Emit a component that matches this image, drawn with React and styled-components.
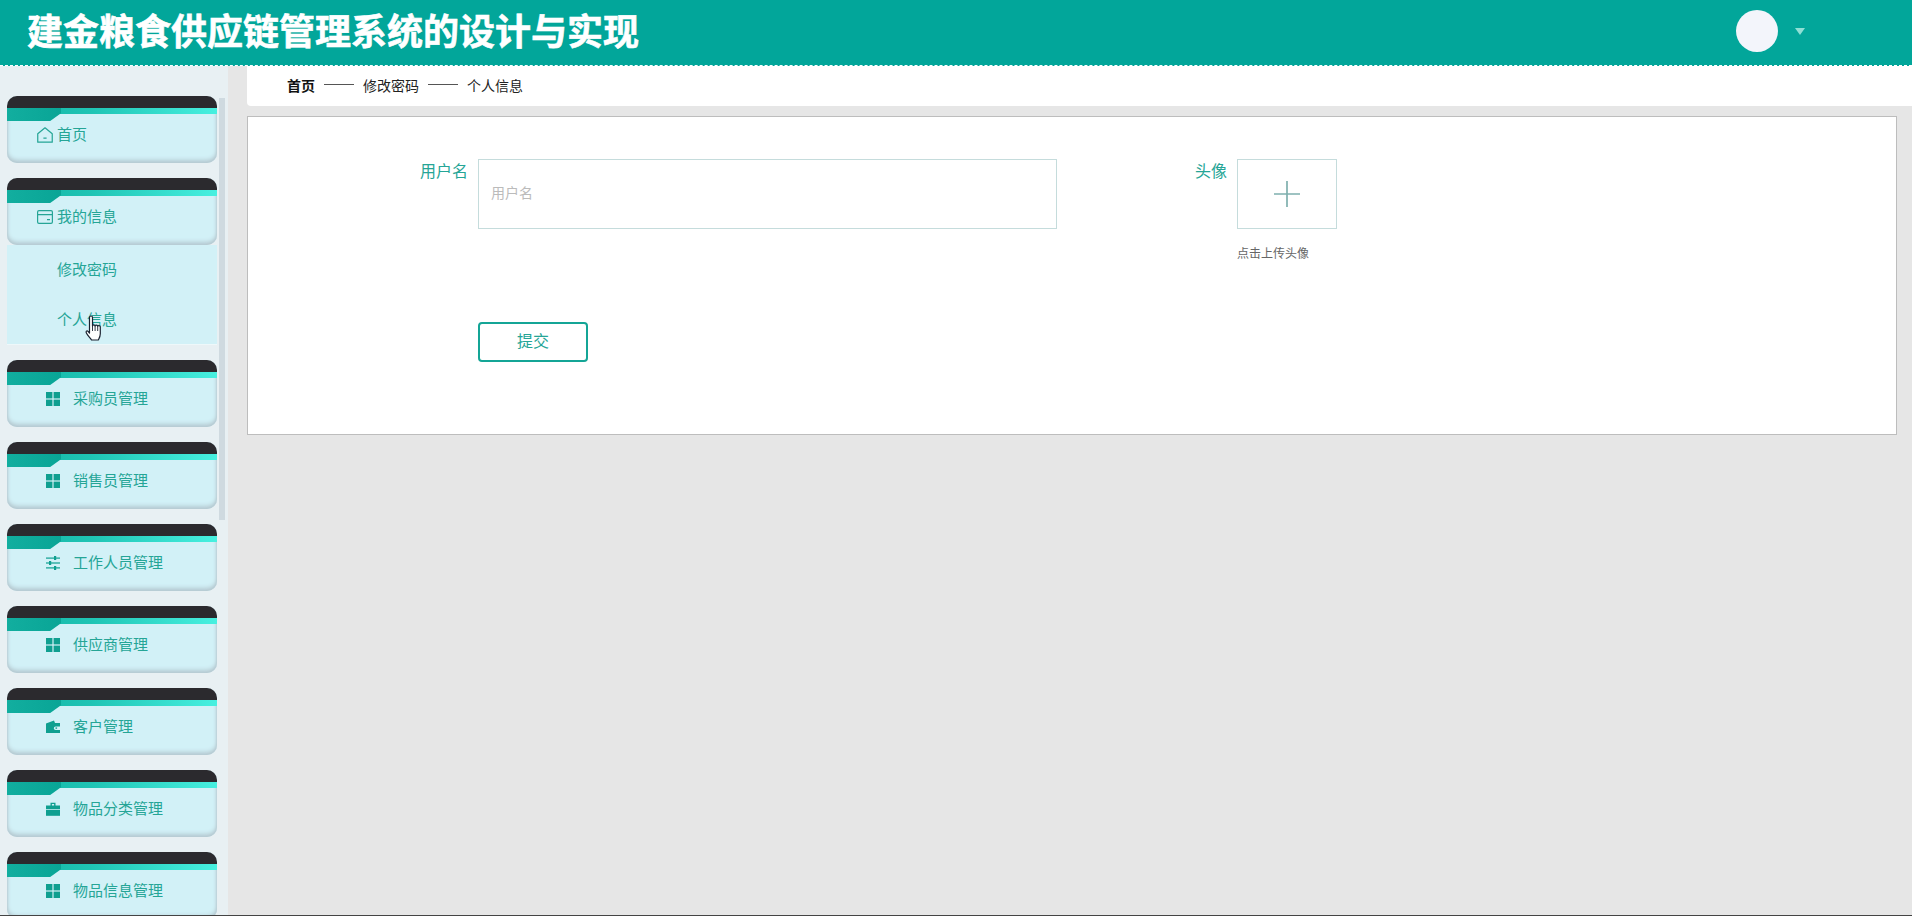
import React from "react";
import styled, { createGlobalStyle } from "styled-components";

const GlobalStyle = createGlobalStyle`
  html, body {
    margin: 0;
    padding: 0;
    height: 100%;
    overflow: hidden;
    background: #e6e6e6;
    font-family: "Noto Sans CJK SC", "Noto Sans", "Liberation Sans", sans-serif;
  }
  * {
    box-sizing: border-box;
  }
`;

const teal = "#25a596";
const iconTeal = "#0f9f90";

const Page = styled.div`
  position: relative;
  height: 100vh;
  display: flex;
  flex-direction: column;
  overflow: hidden;
  border-bottom: 1px solid #444;
`;

const Header = styled.header`
  flex: none;
  height: 66px;
  padding: 0 107px 3px 27px;
  display: flex;
  align-items: center;
  justify-content: space-between;
  background: #02a69a;
  border-bottom: 1px dashed #fff;
`;

const Title = styled.h1`
  margin: 0 0 5px;
  font-size: 36px;
  line-height: 56px;
  font-weight: 700;
  color: #fff;
  -webkit-text-stroke: 0.6px #fff;
`;

const UserBox = styled.div`
  display: flex;
  align-items: center;
  gap: 17px;
`;

const Avatar = styled.div`
  width: 42px;
  height: 42px;
  border-radius: 50%;
  background: #f3f5fb;
`;

const Caret = styled.div`
  width: 0;
  height: 0;
  border-left: 5px solid transparent;
  border-right: 5px solid transparent;
  border-top: 7px solid #8fdfd5;
`;

const Body = styled.div`
  flex: 1;
  min-height: 0;
  display: flex;
`;

const Sidebar = styled.aside`
  position: relative;
  flex: none;
  width: 228px;
  padding: 30px 0 0 7px;
  overflow: hidden;
  background: #e8f0f3;
`;

const ScrollThumb = styled.div`
  position: absolute;
  top: 32px;
  right: 3px;
  width: 6px;
  height: 422px;
  background: #cfdae0;
`;

const Group = styled.div`
  width: 210px;
  margin-bottom: 15px;
`;

const Item = styled.div`
  position: relative;
  height: 67px;
  padding: 11px 0 0 ${(p) => (p.$wide ? 39 : 30)}px;
  display: flex;
  align-items: center;
  gap: ${(p) => (p.$wide ? 13 : 4)}px;
  border-radius: 10px;
  overflow: hidden;
  font-size: 15px;
  color: ${teal};
  background: #d2f1f7;
  box-shadow: inset 0 -3px 4px #b5c9d1, inset 1px 0 2px #c4d8de, inset -1px 0 2px #c4d8de;

  &::before {
    content: "";
    position: absolute;
    inset: 0 0 auto 0;
    height: 18px;
    background:
      linear-gradient(#2b2a2e, #2b2a2e) top / 100% 12px no-repeat,
      linear-gradient(90deg, #12b3a4 0%, #1fc4b4 40%, #47f0e0 100%) bottom / 100% 6px no-repeat;
  }

  &::after {
    content: "";
    position: absolute;
    left: 0;
    top: 12px;
    width: 54px;
    height: 13px;
    background: linear-gradient(90deg, #12ae9f, #09a596);
    clip-path: polygon(0 0, 100% 0, 100% 40%, 80% 100%, 0 100%);
  }

  svg {
    flex: none;
  }
`;

const ItemText = styled.span`
  margin-bottom: 3px;
`;

const SubMenu = styled.div`
  height: 100px;
  padding: 0 0 0 50px;
  display: flex;
  flex-direction: column;
  font-size: 15px;
  color: ${teal};
  background: #d2f1f7;
  border-bottom: 1px solid #eef8fa;
`;

const SubItem = styled.div`
  height: 51px;
  line-height: 47px;
`;

const Main = styled.main`
  flex: 1;
  min-width: 0;
  margin-left: 19px;
`;

const Breadcrumb = styled.nav`
  height: 40px;
  padding: 0 0 3px 40px;
  display: flex;
  align-items: center;
  gap: 9px;
  font-size: 14px;
  color: #222;
  background: #fff;
  border-bottom-left-radius: 4px;
`;

const Crumb = styled.span`
  font-weight: ${(p) => (p.$bold ? 700 : 400)};
  color: ${(p) => (p.$bold ? "#111" : "#222")};
`;

const CrumbLine = styled.span`
  width: 30px;
  height: 1px;
  background: #555;
`;

const Panel = styled.section`
  margin: 10px 15px 0 0;
  padding: 42px 0 72px;
  background: #fff;
  border: 1px solid #bdbdbd;
`;

const FormRow = styled.div`
  display: flex;
  align-items: flex-start;
`;

const Label = styled.label`
  width: ${(p) => p.$width}px;
  margin-right: 10px;
  text-align: right;
  font-size: 16px;
  line-height: 22px;
  color: ${teal};
`;

const Input = styled.input`
  width: 579px;
  height: 70px;
  padding: 0 12px 4px;
  font: inherit;
  font-size: 14px;
  background: #fff;
  border: 1px solid #c5dcdc;
  outline: none;

  &::placeholder {
    color: #bbb;
    opacity: 1;
  }
`;

const UploadColumn = styled.div`
  display: flex;
  flex-direction: column;
`;

const UploadBox = styled.div`
  width: 100px;
  height: 70px;
  display: flex;
  align-items: center;
  justify-content: center;
  background: #fff;
  border: 1px solid #c5dcdc;
`;

const Hint = styled.div`
  margin: 14px 0 2px;
  font-size: 12px;
  line-height: 20px;
  color: #666;
`;

const SubmitButton = styled.button`
  display: block;
  width: 110px;
  height: 40px;
  margin: 57px 0 0 230px;
  padding: 0 0 4px;
  font: inherit;
  font-size: 16px;
  color: ${teal};
  background: #fff;
  border: 2px solid #14a596;
  border-radius: 4px;
`;

const HandCursor = styled.div`
  position: absolute;
  left: 84px;
  top: 315px;
`;

const HomeIcon = () => (
  <svg width="16" height="16" viewBox="0 0 17 17" fill="none" stroke={teal} strokeWidth="1.3">
    <path d="M0.8 7.2 8.500 0.9l7.700 6.300v8.900H0.800z" strokeLinejoin="round" />
    <path d="M6.800 11.800h3.400" />
  </svg>
);

const CardIcon = () => (
  <svg width="16" height="16" viewBox="0 0 16 16" fill="none" stroke={teal} strokeWidth="1.2">
    <rect x="0.6" y="1.600" width="14.800" height="12.800" rx="1.400" />
    <path d="M0.6 5.600h14.800" />
    <path d="M10 10.600h3" />
  </svg>
);

const GridIcon = () => (
  <svg width="14" height="14" viewBox="0 0 14 14" fill={iconTeal}>
    <rect x="0" y="0" width="6.400" height="6.400" />
    <rect x="7.600" y="0" width="6.400" height="6.400" />
    <rect x="0" y="7.600" width="6.400" height="6.400" />
    <rect x="7.600" y="7.600" width="6.400" height="6.400" />
  </svg>
);

const SlidersIcon = () => (
  <svg width="14" height="14" viewBox="0 0 14 14" fill={iconTeal}>
    <rect x="0" y="1.500" width="14" height="1.200" />
    <rect x="8" y="0" width="2.200" height="4" />
    <rect x="0" y="6.400" width="14" height="1.200" />
    <rect x="3" y="5" width="2.200" height="4" />
    <rect x="0" y="11.300" width="14" height="1.200" />
    <rect x="8" y="10" width="2.200" height="4" />
  </svg>
);

const WalletIcon = () => (
  <svg width="14" height="14" viewBox="0 0 14 14" fill={iconTeal}>
    <path d="M0 3.500 8 0.600l1 2.400h5v3.400H9.600a1.800 1.800 0 0 0 0 3.600H14V13H0z" />
    <rect x="9.500" y="7.400" width="1.600" height="1.400" />
  </svg>
);

const BagIcon = () => (
  <svg width="14" height="14" viewBox="0 0 14 14" fill={iconTeal}>
    <path d="M4.500 3.500V0.800h5v2.700h4.500v3.700H0V3.500zM5.900 3.500h2.200V2H5.900z" fillRule="evenodd" />
    <rect x="0" y="8" width="14" height="5.800" />
  </svg>
);

const PlusIcon = () => (
  <svg width="28" height="28" viewBox="0 0 28 28" fill="none" stroke="#7fb0ae" strokeWidth="1.700">
    <path d="M1 14h26M14 1v26" />
  </svg>
);

const HandIcon = () => (
  <svg width="20" height="28" viewBox="0 0 20 28">
    <path
      d="M5.500 2.500c0-2 3-2 3 0V11c0-1.500 2.600-1.500 2.600 0 0-1.200 2.600-1.200 2.600.3 0-1 2.600-1 2.600.5v7c0 3-1 4.500-2 6.200H7.500c-1-2-3.200-3.500-5-6.700-1.200-2 .4-3.200 1.600-2l1.400 1.700z"
      fill="#fff"
      stroke="#1a2230"
      strokeWidth="1.200"
      strokeLinejoin="round"
    />
    <path d="M8.500 11v5M11.100 11v5M13.700 11.300V16" stroke="#1a2230" strokeWidth="0.900" fill="none" />
  </svg>
);

const menu = [
  { title: "首页", icon: <HomeIcon /> },
  { title: "我的信息", icon: <CardIcon />, children: ["修改密码", "个人信息"] },
  { title: "采购员管理", icon: <GridIcon />, wide: true },
  { title: "销售员管理", icon: <GridIcon />, wide: true },
  { title: "工作人员管理", icon: <SlidersIcon />, wide: true },
  { title: "供应商管理", icon: <GridIcon />, wide: true },
  { title: "客户管理", icon: <WalletIcon />, wide: true },
  { title: "物品分类管理", icon: <BagIcon />, wide: true },
  { title: "物品信息管理", icon: <GridIcon />, wide: true },
];

const App = () => {
  return (
    <>
      <GlobalStyle />
      <Page>
        <Header>
          <Title>建金粮食供应链管理系统的设计与实现</Title>
          <UserBox>
            <Avatar />
            <Caret />
          </UserBox>
        </Header>
        <Body>
          <Sidebar>
            <ScrollThumb />
            {menu.map((m) => (
              <Group key={m.title}>
                <Item $wide={m.wide}>
                  {m.icon}
                  <ItemText>{m.title}</ItemText>
                </Item>
                {m.children && (
                  <SubMenu>
                    {m.children.map((c) => (
                      <SubItem key={c}>{c}</SubItem>
                    ))}
                  </SubMenu>
                )}
              </Group>
            ))}
          </Sidebar>
          <Main>
            <Breadcrumb>
              <Crumb $bold>首页</Crumb>
              <CrumbLine />
              <Crumb>修改密码</Crumb>
              <CrumbLine />
              <Crumb>个人信息</Crumb>
            </Breadcrumb>
            <Panel>
              <FormRow>
                <Label $width={220}>用户名</Label>
                <Input placeholder="用户名" />
                <Label $width={170}>头像</Label>
                <UploadColumn>
                  <UploadBox>
                    <PlusIcon />
                  </UploadBox>
                  <Hint>点击上传头像</Hint>
                </UploadColumn>
              </FormRow>
              <SubmitButton type="button">提交</SubmitButton>
            </Panel>
          </Main>
        </Body>
        <HandCursor>
          <HandIcon />
        </HandCursor>
      </Page>
    </>
  );
};

export default App;
